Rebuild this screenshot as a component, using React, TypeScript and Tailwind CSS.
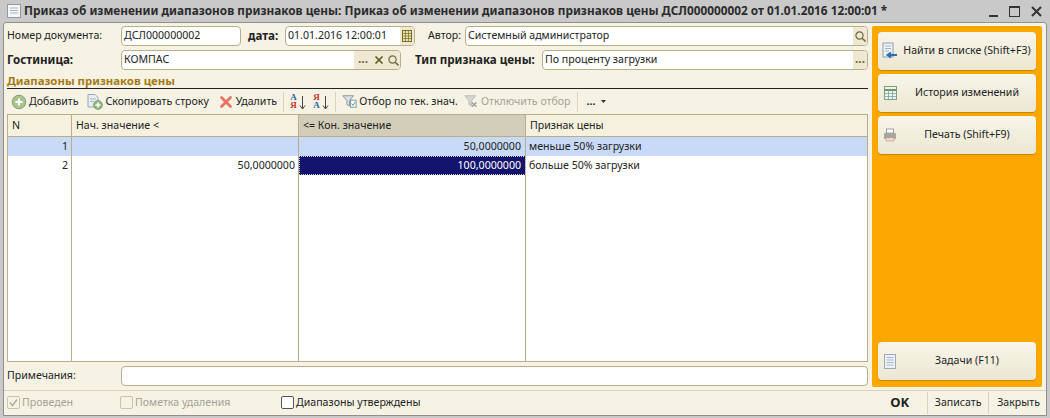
// 1C document form: price range order window
import type { ReactNode } from 'react';

const font = { fontFamily: '"Noto Sans", sans-serif' };

function FindIcon() {
  return (
    <svg width="13" height="13" viewBox="0 0 13 13" fill="none">
      <circle cx="5.5" cy="5.5" r="3.6" stroke="#6f6a3c" strokeWidth="1.2" />
      <path d="M8.2 8.2 11.5 11.5" stroke="#6f6a3c" strokeWidth="1.6" />
    </svg>
  );
}

function Dots() {
  return <span className="leading-none text-[#6f6a3c] text-[12px] font-bold tracking-[0px] -mt-[2px]">...</span>;
}

function Cross() {
  return (
    <svg width="10" height="10" viewBox="0 0 10 10">
      <path d="M1.5 1.5 8.5 8.5M8.5 1.5 1.5 8.5" stroke="#5f5a20" strokeWidth="1.7" />
    </svg>
  );
}

function Field({ value, className, children }: { value?: string; className: string; children?: ReactNode }) {
  return (
    <div className={`flex h-[20px] items-stretch overflow-hidden rounded-[4px] border border-[#b8ae8c] bg-white ${className}`}>
      <span className="flex-1 pl-[2px] text-[10.6px] leading-[17px] text-[#222] whitespace-nowrap">{value}</span>
      {children}
    </div>
  );
}

function FieldBtn({ children, w = 'w-[14px]' }: { children: ReactNode; w?: string }) {
  return <span className={`flex items-center justify-center bg-[#efe9d3] ${w}`}>{children}</span>;
}

function ToolBtn({ icon, label, muted }: { icon: ReactNode; label: string; muted?: boolean }) {
  return (
    <div className={`flex items-center gap-[2px] whitespace-nowrap ${muted ? 'text-[#a5a296]' : 'text-[#222]'}`}>
      {icon}
      <span>{label}</span>
    </div>
  );
}

function Sep() {
  return <span className="mx-[6px] h-[20px] w-px bg-[#d9d4bd]" />;
}

function SortIcon({ flip }: { flip?: boolean }) {
  const top = flip ? 'Я' : 'А';
  const bottom = flip ? 'А' : 'Я';
  return (
    <span className="relative flex h-[18px] w-[16px] flex-col items-start font-['Liberation_Serif',serif] text-[9px] font-bold leading-[8px]">
      <span className={flip ? 'text-[#c0392b]' : 'text-[#2a5ea8]'}>{top}</span>
      <span className={flip ? 'text-[#2a5ea8]' : 'text-[#c0392b]'}>{bottom}</span>
      <svg className="absolute right-0 top-[3px]" width="7" height="14" viewBox="0 0 7 14">
        <path d="M3.5 0V12M1 9.5 3.5 13 6 9.5" stroke="#444" fill="none" />
      </svg>
    </span>
  );
}

function FilterIcon({ off }: { off?: boolean }) {
  return (
    <svg width="15" height="15" viewBox="0 0 17 16">
      <path d="M1 1.5H13L8.6 7V13L5.6 11.5V7Z" fill={off ? '#d6d6d6' : '#dfe3e6'} stroke={off ? '#b5b5b5' : '#7d8a90'} />
      {off ? (
        <path d="M9 9 14 14M14 9 9 14" stroke="#9d9d9d" strokeWidth="1.6" />
      ) : (
        <>
          <rect x="9.5" y="6.5" width="6.5" height="8" fill="#fff" stroke="#6f8fa8" />
          <path d="M11 10.5 12.5 12.5 15 8.5" stroke="#3f8f5f" fill="none" />
        </>
      )}
    </svg>
  );
}

function SideButton({ icon, label, className }: { icon: ReactNode; label: string; className?: string }) {
  return (
    <div className={`flex h-[38px] items-center rounded-[4px] bg-gradient-to-b from-[#f8f6ea] to-[#ece7d2] pl-[2px] pr-[2px] text-[10.6px] text-[#222] shadow-[0_1px_1px_rgba(120,90,20,0.45)] ${className ?? ''}`}>
      <span className="flex w-[20px] shrink-0 justify-center">{icon}</span>
      <span className="flex-1 whitespace-nowrap text-center">{label}</span>
    </div>
  );
}

export default function App() {
  return (
    <div style={font} className="flex h-[418px] w-[1050px] flex-col overflow-hidden bg-[#c9c9c9] text-[10.6px] text-[#222]">
      {/* title bar */}
      <div className="flex h-[22px] shrink-0 items-center pl-[6px] pr-[8px]">
        <svg width="16" height="16" viewBox="0 0 16 16">
          <rect x="1.5" y="1.5" width="13" height="13" fill="#f4f6f8" stroke="#8e9aa6" />
          <path d="M4 5H12M4 7.5H12M4 10H12" stroke="#aab4be" />
        </svg>
        <span className="ml-[2px] flex-1 whitespace-nowrap text-[11.8px] font-bold text-[#2b2b2b]">
          Приказ об изменении диапазонов признаков цены: Приказ об изменении диапазонов признаков цены ДСЛ000000002 от 01.01.2016 12:00:01 *
        </span>
        <div className="flex items-center gap-[11px]">
          <span className="mt-[10px] h-[2px] w-[9px] bg-[#333]" />
          <span className="h-[11px] w-[11px] border border-t-2 border-[#333]" />
          <svg width="11" height="11" viewBox="0 0 11 11">
            <path d="M1 1 10 10M10 1 1 10" stroke="#333" strokeWidth="2" />
          </svg>
        </div>
      </div>

      {/* window body */}
      <div className="mx-[3px] mb-[2px] flex min-h-0 flex-1 flex-col rounded-t-[3px] border border-[#8f8f8f] bg-[#f6f3e4]">
        <div className="flex min-h-0 flex-1">
          <div className="flex min-w-0 flex-1 flex-col pl-[3px] pr-[4px] pt-[3px]">
            {/* header rows */}
            <div className="flex h-[20px] items-center">
              <span className="w-[114px] shrink-0">Номер документа:</span>
              <Field value="ДСЛ000000002" className="w-[120px]" />
              <span className="ml-[7px] w-[37px] shrink-0 text-[11.6px] font-bold">дата:</span>
              <Field value="01.01.2016 12:00:01" className="w-[130px]">
                <FieldBtn>
                  <svg width="10" height="12" viewBox="0 0 10 12">
                    <rect x="0.5" y="0.5" width="9" height="11" fill="#e9e2b8" stroke="#7a6a20" />
                    <path d="M0 3.5H10M0 6H10M0 8.5H10M3.5 0V12M6.5 0V12" stroke="#7a6a20" strokeWidth="0.7" />
                  </svg>
                </FieldBtn>
              </Field>
              <span className="ml-[13px] w-[37px] shrink-0">Автор:</span>
              <Field value="Системный администратор" className="flex-1">
                <FieldBtn w="w-[14px]"><FindIcon /></FieldBtn>
              </Field>
            </div>
            <div className="mt-[4px] flex h-[20px] items-center">
              <span className="w-[114px] shrink-0 text-[11.6px] font-bold">Гостиница:</span>
              <Field value="КОМПАС" className="w-[280px]">
                <FieldBtn w="w-[18px]"><Dots /></FieldBtn>
                <FieldBtn><Cross /></FieldBtn>
                <FieldBtn><FindIcon /></FieldBtn>
              </Field>
              <span className="ml-[14px] w-[127px] shrink-0 whitespace-nowrap text-[11.6px] font-bold">Тип признака цены:</span>
              <Field value="По проценту загрузки" className="flex-1">
                <FieldBtn><Dots /></FieldBtn>
              </Field>
            </div>

            {/* group title */}
            <div className="mt-[2px] h-[17px] border-b border-[#222] text-[11.4px] font-bold leading-[17px] text-[#a57a14]">
              Диапазоны признаков цены
            </div>

            {/* toolbar */}
            <div className="flex h-[25px] shrink-0 items-center pl-[4px]">
              <ToolBtn
                label="Добавить"
                icon={
                  <svg width="16" height="16" viewBox="0 0 16 16">
                    <circle cx="8" cy="8" r="6.8" fill="#a9c68d" stroke="#8a9a7a" />
                    <path d="M8 4.5V11.5M4.5 8H11.5" stroke="#fff" strokeWidth="2" />
                  </svg>
                }
              />
              <span className="w-[8px]" />
              <ToolBtn
                label="Скопировать строку"
                icon={
                  <svg width="17" height="17" viewBox="0 0 17 17">
                    <path d="M2 1.5H9L12 4.5V14H2Z" fill="#e8eef3" stroke="#97a7b5" />
                    <path d="M4 6H10M4 8.5H8" stroke="#a8b6c2" />
                    <circle cx="12" cy="12" r="4.3" fill="#8fbf80" stroke="#749a6a" />
                    <path d="M12 9.5V14.5M9.5 12H14.5" stroke="#fff" strokeWidth="1.5" />
                  </svg>
                }
              />
              <span className="w-[9px]" />
              <ToolBtn
                label="Удалить"
                icon={
                  <svg width="16" height="16" viewBox="0 0 16 16">
                    <path d="M3.5 3.5 12.5 12.5M12.5 3.5 3.5 12.5" stroke="#e8735f" strokeWidth="2.8" strokeLinecap="round" />
                  </svg>
                }
              />
              <Sep />
              <SortIcon />
              <span className="w-[7px]" />
              <SortIcon flip />
              <Sep />
              <ToolBtn label="Отбор по тек. знач." icon={<FilterIcon />} />
              <span className="w-[6px]" />
              <ToolBtn label="Отключить отбор" muted icon={<FilterIcon off />} />
              <Sep />
              <span className="ml-[3px] flex items-center gap-[5px] font-bold leading-none">
                ...
                <svg width="5" height="3" viewBox="0 0 5 3"><path d="M0 0H5L2.5 3Z" fill="#333" /></svg>
              </span>
            </div>

            {/* table */}
            <div className="flex min-h-0 flex-1 flex-col border border-[#b8ae8c] bg-white">
              <div className="grid h-[22px] shrink-0 grid-cols-[64px_227px_227px_1fr] border-b border-[#b8ae8c] bg-[#f5f1de] leading-[21px]">
                <div className="border-r border-[#b8ae8c] pl-[4px]">N</div>
                <div className="border-r border-[#b8ae8c] pl-[4px]">Нач. значение &lt;</div>
                <div className="border-r border-[#b8ae8c] bg-[#d2cdb8] pl-[4px]">&lt;= Кон. значение</div>
                <div className="pl-[4px]">Признак цены</div>
              </div>
              <div className="grid flex-1 grid-cols-[64px_227px_227px_1fr] grid-rows-[19px_19px_1fr]">
                <div className="border-r border-[#b8ae8c] bg-[#c8daf8] pr-[3px] text-right leading-[19px]">1</div>
                <div className="border-r border-[#b8ae8c] bg-[#c8daf8]" />
                <div className="border-r border-[#b8ae8c] bg-[#c8daf8] pr-[4px] text-right leading-[19px]">50,0000000</div>
                <div className="bg-[#c8daf8] pl-[3px] leading-[19px]">меньше 50% загрузки</div>
                <div className="border-r border-[#b8ae8c] pr-[3px] text-right leading-[19px]">2</div>
                <div className="border-r border-[#b8ae8c] pr-[3px] text-right leading-[19px]">50,0000000</div>
                <div className="border-r border-[#b8ae8c] bg-[#14146e] pr-[4px] text-right leading-[18px] text-white outline-1 -outline-offset-1 outline-dotted outline-[#c8c8c8]">100,0000000</div>
                <div className="pl-[3px] leading-[19px]">больше 50% загрузки</div>
                <div className="border-r border-[#b8ae8c]" />
                <div className="border-r border-[#b8ae8c]" />
                <div className="border-r border-[#b8ae8c]" />
                <div />
              </div>
            </div>

            {/* notes */}
            <div className="flex h-[28px] shrink-0 items-center">
              <span className="w-[114px] shrink-0">Примечания:</span>
              <div className="h-[20px] flex-1 rounded-[4px] border border-[#b8ae8c] bg-white" />
            </div>
          </div>

          {/* orange side panel */}
          <div className="mb-[3px] mr-[4px] mt-[3px] flex w-[170px] shrink-0 flex-col rounded-[2px] bg-[#fca800] px-[6px] pb-[7px] pt-[6px]">
            <SideButton
              label="Найти в списке (Shift+F3)"
              icon={
                <svg width="16" height="18" viewBox="0 0 16 18">
                  <rect x="1" y="1" width="10" height="14" fill="#eef3f8" stroke="#8aa0b5" />
                  <path d="M3 4H9M3 6.5H9M3 9H7" stroke="#9db2c4" />
                  <path d="M15 13H6M9 10.5 5.5 13 9 15.5" stroke="#2f6fb0" strokeWidth="2" fill="none" />
                </svg>
              }
            />
            <SideButton
              className="mt-[4px]"
              label="История изменений"
              icon={
                <svg width="13" height="14" viewBox="0 0 13 14">
                  <rect x="0.5" y="0.5" width="12" height="13" fill="#eef6ec" stroke="#7ba07b" />
                  <path d="M0 4H13" stroke="#6f9a5f" strokeWidth="2" />
                  <path d="M0 7.5H13M0 10.5H13M4.5 3V14M8.5 3V14" stroke="#7ba0a8" strokeWidth="0.8" />
                </svg>
              }
            />
            <SideButton
              className="mt-[4px]"
              label="Печать (Shift+F9)"
              icon={
                <svg width="14" height="14" viewBox="0 0 14 14">
                  <rect x="3.5" y="1" width="7" height="4" fill="#fff" stroke="#a0a0a0" />
                  <rect x="1" y="5" width="12" height="6" rx="1" fill="#a9a5a0" />
                  <rect x="3" y="9.5" width="8" height="3.5" fill="#f0d8d0" stroke="#b08070" strokeWidth="0.5" />
                </svg>
              }
            />
            <div className="flex-1" />
            <SideButton
              label="Задачи (F11)"
              icon={
                <svg width="12" height="15" viewBox="0 0 12 15">
                  <rect x="0.5" y="0.5" width="11" height="14" fill="#eef2f8" stroke="#9aaabc" />
                  <path d="M2.5 3.5H9.5M2.5 6H9.5M2.5 8.5H9.5M2.5 11H9.5" stroke="#a8b8cc" />
                </svg>
              }
            />
          </div>
        </div>

        {/* bottom bar */}
        <div className="flex h-[25px] shrink-0 items-center border-t border-[#d8d3bd] bg-[#f6f3e4] pl-[3px] pr-[6px]">
          <div className="flex w-[113px] items-center gap-[2px] text-[#a5a296]">
            <span className="flex h-[13px] w-[13px] items-center justify-center rounded-[2px] border border-[#c8c4b0]">
              <svg width="9" height="9" viewBox="0 0 9 9"><path d="M1 4.5 3.5 7.5 8 1.5" stroke="#b0ad9d" strokeWidth="1.5" fill="none" /></svg>
            </span>
            Проведен
          </div>
          <div className="flex w-[161px] items-center gap-[2px] text-[#a5a296]">
            <span className="h-[13px] w-[13px] rounded-[2px] border border-[#c8c4b0]" />
            Пометка удаления
          </div>
          <div className="flex flex-1 items-center gap-[2px]">
            <span className="h-[13px] w-[13px] rounded-[2px] border border-[#555] bg-white" />
            Диапазоны утверждены
          </div>
          <span className="w-[37px] text-[13px] font-bold">OK</span>
          <span className="flex h-[22px] w-[61px] items-center justify-center border-l border-[#d8d3bd]">Записать</span>
          <span className="flex h-[22px] items-center border-l border-[#d8d3bd] pl-[8px]">Закрыть</span>
        </div>
      </div>
    </div>
  );
}
